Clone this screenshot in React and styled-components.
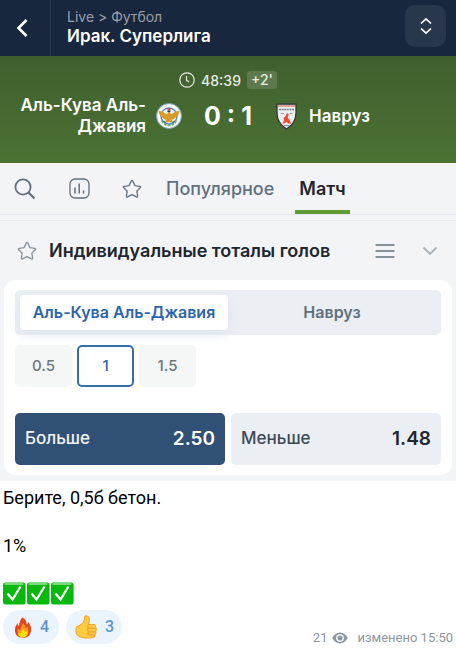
//Libs
import React, { useState } from "react";
import styled, { createGlobalStyle } from "styled-components";

//Style
const GlobalStyle = createGlobalStyle`
  * {
    box-sizing: border-box;
  }

  body {
    margin: 0;
    background: #ffffff;
    font-family: Inter, "Liberation Sans", sans-serif;
  }

  button {
    margin: 0;
    padding: 0;
    border: 0;
    background: none;
    color: inherit;
    font: inherit;
    cursor: pointer;
  }

  h1, h2, p {
    margin: 0;
  }

  svg {
    display: block;
    flex-shrink: 0;
  }
`;

const Header = styled.header`
  display: flex;
  align-items: center;
  height: 56px;
  padding-right: 10px;
  background: #18263e;
  color: #ffffff;
`;

const BackButton = styled.button`
  display: flex;
  align-items: center;
  justify-content: center;
  align-self: stretch;
  width: 51px;
  padding-right: 6px;
  border-right: 1px solid #2b3950;
`;

const Heading = styled.div`
  flex: 1;
  padding: 0 0 2px 16px;
`;

const Crumbs = styled.p`
  color: #9a9fa8;
  font-size: 14px;
  line-height: 18px;
`;

const League = styled.h1`
  font-size: 17px;
  font-weight: 600;
  line-height: 20px;
`;

const SwitchButton = styled.button`
  display: flex;
  align-items: center;
  justify-content: center;
  width: 41px;
  height: 42px;
  margin-bottom: 4px;
  border-radius: 10px;
  background: #29374d;
`;

const Scoreboard = styled.section`
  height: 107px;
  padding-top: 14px;
  background: linear-gradient(#405f2f, #4b7233);
  color: #ffffff;
`;

const Clock = styled.div`
  display: flex;
  align-items: center;
  justify-content: center;
  gap: 6px;
  height: 20px;
  color: #e8ede6;
  font-size: 14px;
  font-weight: 500;
`;

const Added = styled.span`
  padding: 0 4px;
  border-radius: 3px;
  background: #5c7a4c;
  line-height: 18px;
`;

const Teams = styled.div`
  display: grid;
  grid-template-columns: 1fr 50px 1fr;
  align-items: center;
  gap: 21px;
  margin-top: 5px;
`;

const Team = styled.div`
  display: flex;
  align-items: center;
  justify-content: ${({ $home }) => ($home ? "flex-end" : "flex-start")};
  gap: ${({ $home }) => ($home ? "10px" : "12px")};
  padding-left: ${({ $home }) => ($home ? "0" : "2px")};
  text-align: ${({ $home }) => ($home ? "right" : "left")};
  font-size: 17px;
  font-weight: 600;
  line-height: 21px;
`;

const TeamName = styled.span`
  max-width: 134px;
`;

const Score = styled.div`
  font-size: 25px;
  font-weight: 700;
  line-height: 32px;
  text-align: center;
  white-space: nowrap;
`;

const Markets = styled.main`
  padding-bottom: 6px;
  background: #f3f4f7;
`;

const Tabs = styled.nav`
  display: flex;
  align-items: stretch;
  height: 52px;
  padding-left: 14px;
  border-bottom: 1px solid #e0e5ee;
  color: #61707c;
`;

const IconTab = styled.button`
  display: flex;
  align-items: center;
  width: ${({ $width }) => $width};
`;

const Tab = styled.button`
  margin-right: 17px;
  padding: 0 4px;
  border-top: 4px solid transparent;
  border-bottom: 4px solid ${({ $active }) => ($active ? "#629c35" : "transparent")};
  color: ${({ $active }) => ($active ? "#1f262d" : "#61707c")};
  font-size: 18px;
  font-weight: ${({ $active }) => ($active ? 600 : 500)};
`;

const MarketHeader = styled.div`
  display: flex;
  align-items: center;
  height: 60px;
  margin-top: 5px;
  padding: 0 17px;
  border-top: 1px solid #e6eaf1;
  color: #87929b;
`;

const MarketTitle = styled.h2`
  flex: 1;
  padding-left: 12px;
  color: #20262d;
  font-size: 18px;
  font-weight: 600;
`;

const IconButton = styled.button`
  margin-left: 26px;
`;

const Card = styled.div`
  margin: 0 4px;
  padding: 10px 11px;
  border-radius: 12px;
  background: #ffffff;
`;

const Segments = styled.div`
  display: grid;
  grid-template-columns: 1fr 1fr;
  height: 45px;
  padding: 5px;
  border-radius: 5px;
  background: #ebeef3;
`;

const Segment = styled.button`
  padding-bottom: 2px;
  border-radius: 4px;
  background: ${({ $active }) => ($active ? "#ffffff" : "transparent")};
  box-shadow: ${({ $active }) => ($active ? "0 4px 12px #dfe5ed" : "none")};
  color: ${({ $active }) => ($active ? "#2c65ab" : "#61707c")};
  font-size: 16px;
  font-weight: 600;
  white-space: nowrap;
`;

const Lines = styled.div`
  display: flex;
  gap: 5px;
  margin-top: 10px;
`;

const Line = styled.button`
  width: 57px;
  height: 42px;
  padding-bottom: 2px;
  border: 2px solid ${({ $active }) => ($active ? "#3470b0" : "transparent")};
  border-radius: 5px;
  background: ${({ $active }) => ($active ? "#ffffff" : "#f5f6f6")};
  color: ${({ $active }) => ($active ? "#2c65ab" : "#6b7780")};
  font-size: 15px;
  font-weight: 500;
`;

const Odds = styled.div`
  display: grid;
  grid-template-columns: 1fr 1fr;
  gap: 6px;
  margin-top: 26px;
`;

const Outcome = styled.button`
  display: flex;
  align-items: center;
  justify-content: space-between;
  height: 52px;
  padding: 0 10px 2px;
  border-radius: 5px;
  background: ${({ $active }) => ($active ? "#315075" : "#ebeef3")};
  color: ${({ $active }) => ($active ? "#f2f4f7" : "#3f4a54")};
  font-size: 17px;
  font-weight: 500;
`;

const Price = styled.strong`
  color: ${({ $active }) => ($active ? "#ffffff" : "#20262d")};
  font-size: 19px;
  font-weight: 600;
`;

const Message = styled.article`
  padding: 5px 3px 0;
  color: #000000;
  font-family: Roboto, "Liberation Sans", sans-serif;
  font-size: 18px;
  line-height: 24px;
`;

const Paragraph = styled.p`
  margin-bottom: 24px;
`;

const Checks = styled.div`
  display: flex;
  gap: 1px;
`;

const Footer = styled.footer`
  display: flex;
  align-items: flex-end;
  justify-content: space-between;
  margin-top: 5px;
`;

const Reactions = styled.div`
  display: flex;
  gap: 7px;
  margin-bottom: 2px;
`;

const Reaction = styled.button`
  display: flex;
  align-items: center;
  justify-content: center;
  gap: 8px;
  width: 56px;
  height: 34px;
  padding-left: 1px;
  border-radius: 17px;
  background: #ebf3fd;
  color: #5b93cf;
  font-size: 16px;
  font-weight: 500;
`;

const Meta = styled.div`
  display: flex;
  align-items: center;
  gap: 5px;
  color: #8e979f;
  font-size: 13px;
  line-height: 16px;
`;

const Edited = styled.span`
  margin-left: 4px;
`;

//Icons
const Star = () => (
  <svg width="20" height="20" viewBox="0 0 20 20" fill="none" stroke="currentColor" strokeWidth="1.3" strokeLinejoin="round">
    <path d="M9.2 2.1Q10 .8 10.8 2.1L13 6.6L17.8 7.3Q19.3 7.6 18.2 8.8L14.8 12.2L15.6 17Q15.7 18.5 14.4 17.9L10 15.6L5.6 17.9Q4.3 18.5 4.4 17L5.2 12.2L1.8 8.8Q.7 7.6 2.2 7.3L7 6.6Z" />
  </svg>
);

const HomeCrest = () => (
  <svg width="26" height="26" viewBox="0 0 26 26">
    <circle cx="13" cy="13" r="12.5" fill="#f6f7f5" stroke="#7ba0bd" />
    <circle cx="13" cy="13" r="8" fill="none" stroke="#4687bb" strokeWidth="1.3" />
    <path d="M5.5 17.5Q8 22.5 13 22.5T20.5 17.5" fill="none" stroke="#69a568" strokeWidth="1.5" strokeDasharray="3 1" />
    <path d="M2.5 7.8L6.5 8.5L11 11.5L12 9H14L15 11.5L19.5 8.5L23.5 7.8Q23 13 18.5 15.5L16 17L17.5 20L13 19L8.5 20L10 17L7.5 15.5Q3 13 2.5 7.8Z" fill="#d99b28" />
    <path d="M11.5 5H14.5V7.5H11.5Z" fill="#d84a43" />
    <path d="M11.5 7.5H14.5V9H11.5Z" fill="#343d48" />
    <path d="M7.5 18L9.5 20M18.5 18L16.5 20" stroke="#2f76b5" strokeWidth="1.5" />
  </svg>
);

const AwayCrest = () => (
  <svg width="21" height="27" viewBox="0 0 21 27">
    <path d="M1 1.2H20V10Q20 20 10.5 26Q1 20 1 10Z" fill="#eceff1" stroke="#303438" strokeWidth="1.3" />
    <path d="M2 3H19" stroke="#dd9a8d" strokeWidth="1.8" />
    <path d="M3 6.5H18" stroke="#778089" strokeWidth="1.5" strokeDasharray="2 .6" />
    <path d="M4.5 10.5H8M13.5 10.5H17" stroke="#9da4ab" />
    <path d="M11 10L12.7 11.5L11.8 14.5L14 18L15.3 20.5H12L10.5 18.8L8.5 20.5H6.5L8.2 17L7.5 15L9.5 13.2Z" fill="#e94d2c" />
    <path d="M8 22.5H13" stroke="#828b93" />
  </svg>
);

const Check = () => (
  <svg width="23" height="23" viewBox="0 0 23 23" role="img" aria-label="✅">
    <rect width="22.6" height="22" y=".5" rx="2.5" fill="#07b80d" />
    <path d="M2.5 2H19.5" stroke="#79d97b" strokeWidth="2" strokeLinecap="round" />
    <path d="M4.5 11.5L9.5 17.5L17.5 4.5" fill="none" stroke="#ffffff" strokeWidth="2.3" />
  </svg>
);

const Fire = () => (
  <svg width="18" height="23" viewBox="0 0 20 24" role="img" aria-label="🔥">
    <path d="M9.2 .5Q14.5 3.2 14 9Q15.8 8.1 15.5 5.5Q19.5 10.2 19 15.5Q18 23.5 10 23.5Q1.5 23 1 15.5Q.7 11 4 7Q4 10 5.6 10.7Q5.8 4.5 9.2 .5Z" fill="#e8441d" />
    <path d="M10.5 7Q12.5 10 12.8 13Q14.2 12.7 15 11Q16.8 15 15.8 18.5Q14 23 10 23Q4.5 22.7 4 18Q3.7 15.5 5 13.5L7 15.5Q7.3 10.7 10.5 7Z" fill="#fa9b24" />
    <path d="M10 13.5Q11 17 13 17L14.5 16Q15.4 22.8 10 23Q4.6 22.8 5 18L7.5 18.5Q8.2 15 10 13.5Z" fill="#ffe100" />
  </svg>
);

const Thumb = () => (
  <svg width="22" height="24" viewBox="0 0 22 24" role="img" aria-label="👍">
    <path d="M1 13.5Q1 11 4 10.8Q8.5 8.5 9.4 5V2Q9.7 .5 11.6 .8Q14.8 1.2 14.5 5L13.6 9.5H19Q21.3 9.8 20.8 12.4Q22 14 20.8 16Q21.5 18.2 20 19.5Q20.1 22.7 16.8 22.8Q8 23.8 3.7 21.2Q1 20 1 17Z" fill="#ffcb3f" stroke="#f1a12c" />
    <path d="M13.6 9.8Q12.4 10.5 12.8 12.3Q13.4 13.4 15.4 13.4H20.5M13.5 13.3Q12 14 12.8 16Q13.5 17 15.3 16.8H20.3M13.4 17Q12.3 18.2 13.5 19.6Q14.3 20.2 16 20H19.5" fill="none" stroke="#f1a12c" strokeWidth="1.3" />
  </svg>
);

const outcomes = [
  { name: "Больше", price: "2.50" },
  { name: "Меньше", price: "1.48" },
];

export default function App() {
  const [team, setTeam] = useState("Аль-Кува Аль-Джавия");
  const [line, setLine] = useState("1");
  const [picked, setPicked] = useState("Больше");

  return (
    <>
      <GlobalStyle />
      <Header>
        <BackButton aria-label="Назад">
          <svg width="12" height="20" viewBox="0 0 12 20" fill="none" stroke="currentColor" strokeWidth="2.6">
            <path d="M10.5 2L2.5 10L10.5 18" />
          </svg>
        </BackButton>
        <Heading>
          <Crumbs>Live &gt; Футбол</Crumbs>
          <League>Ирак. Суперлига</League>
        </Heading>
        <SwitchButton aria-label="Другой матч">
          <svg width="12" height="18" viewBox="0 0 12 18" fill="none" stroke="currentColor" strokeWidth="1.7">
            <path d="M1 6.5L6 1.8L11 6.5M1 11.5L6 16.2L11 11.5" />
          </svg>
        </SwitchButton>
      </Header>

      <Scoreboard>
        <Clock>
          <svg width="16" height="16" viewBox="0 0 16 16" fill="none" stroke="currentColor" strokeWidth="1.2">
            <circle cx="8" cy="8" r="7.2" />
            <path d="M7.5 4V8.3L10.2 10" />
          </svg>
          48:39
          <Added>+2'</Added>
        </Clock>
        <Teams>
          <Team $home>
            <TeamName>Аль-Кува Аль-Джавия</TeamName>
            <HomeCrest />
          </Team>
          <Score>0 : 1</Score>
          <Team>
            <AwayCrest />
            <TeamName>Навруз</TeamName>
          </Team>
        </Teams>
      </Scoreboard>

      <Markets>
        <Tabs>
          <IconTab $width="55px" aria-label="Поиск">
            <svg width="22" height="22" viewBox="0 0 22 22" fill="none" stroke="currentColor" strokeWidth="1.8">
              <circle cx="9" cy="9" r="7.6" />
              <path d="M14.5 14.5L20.5 20.5" strokeWidth="2.2" />
            </svg>
          </IconTab>
          <IconTab $width="53px" aria-label="Статистика">
            <svg width="21" height="21" viewBox="0 0 21 21" fill="none" stroke="currentColor" strokeWidth="1.3">
              <rect x="1" y="1" width="19" height="19" rx="5" />
              <path d="M6 9.5V15.5M10.2 5.5V15.5M14.5 12.5V15.5" strokeWidth="1.5" />
            </svg>
          </IconTab>
          <IconTab $width="40px" aria-label="Избранное">
            <Star />
          </IconTab>
          <Tab>Популярное</Tab>
          <Tab $active>Матч</Tab>
        </Tabs>

        <MarketHeader>
          <Star />
          <MarketTitle>Индивидуальные тоталы голов</MarketTitle>
          <IconButton aria-label="Список">
            <svg width="20" height="16" viewBox="0 0 20 16" stroke="currentColor" strokeWidth="2">
              <path d="M.5 2H19.5M.5 8H19.5M.5 14H19.5" />
            </svg>
          </IconButton>
          <IconButton aria-label="Свернуть">
            <svg width="18" height="10" viewBox="0 0 18 10" fill="none" stroke="#a8b0b8" strokeWidth="1.8">
              <path d="M2.5 1.5L9 8L15.5 1.5" />
            </svg>
          </IconButton>
        </MarketHeader>

        <Card>
          <Segments>
            {["Аль-Кува Аль-Джавия", "Навруз"].map((name) => (
              <Segment key={name} $active={team === name} onClick={() => setTeam(name)}>
                {name}
              </Segment>
            ))}
          </Segments>
          <Lines>
            {["0.5", "1", "1.5"].map((value) => (
              <Line key={value} $active={line === value} onClick={() => setLine(value)}>
                {value}
              </Line>
            ))}
          </Lines>
          <Odds>
            {outcomes.map(({ name, price }) => (
              <Outcome key={name} $active={picked === name} onClick={() => setPicked(name)}>
                {name}
                <Price $active={picked === name}>{price}</Price>
              </Outcome>
            ))}
          </Odds>
        </Card>
      </Markets>

      <Message>
        <Paragraph>Берите, 0,5б бетон.</Paragraph>
        <Paragraph>1%</Paragraph>
        <Checks>
          <Check />
          <Check />
          <Check />
        </Checks>
        <Footer>
          <Reactions>
            <Reaction>
              <Fire />4
            </Reaction>
            <Reaction>
              <Thumb />3
            </Reaction>
          </Reactions>
          <Meta>
            21
            <svg width="16" height="12" viewBox="0 0 16 12">
              <path d="M8 .5Q13 .7 15.8 6Q13 11.3 8 11.5Q3 11.3 .2 6Q3 .7 8 .5Z" fill="currentColor" />
              <circle cx="8" cy="6" r="3.2" fill="none" stroke="#ffffff" strokeWidth="1.3" />
            </svg>
            <Edited>изменено 15:50</Edited>
          </Meta>
        </Footer>
      </Message>
    </>
  );
}
